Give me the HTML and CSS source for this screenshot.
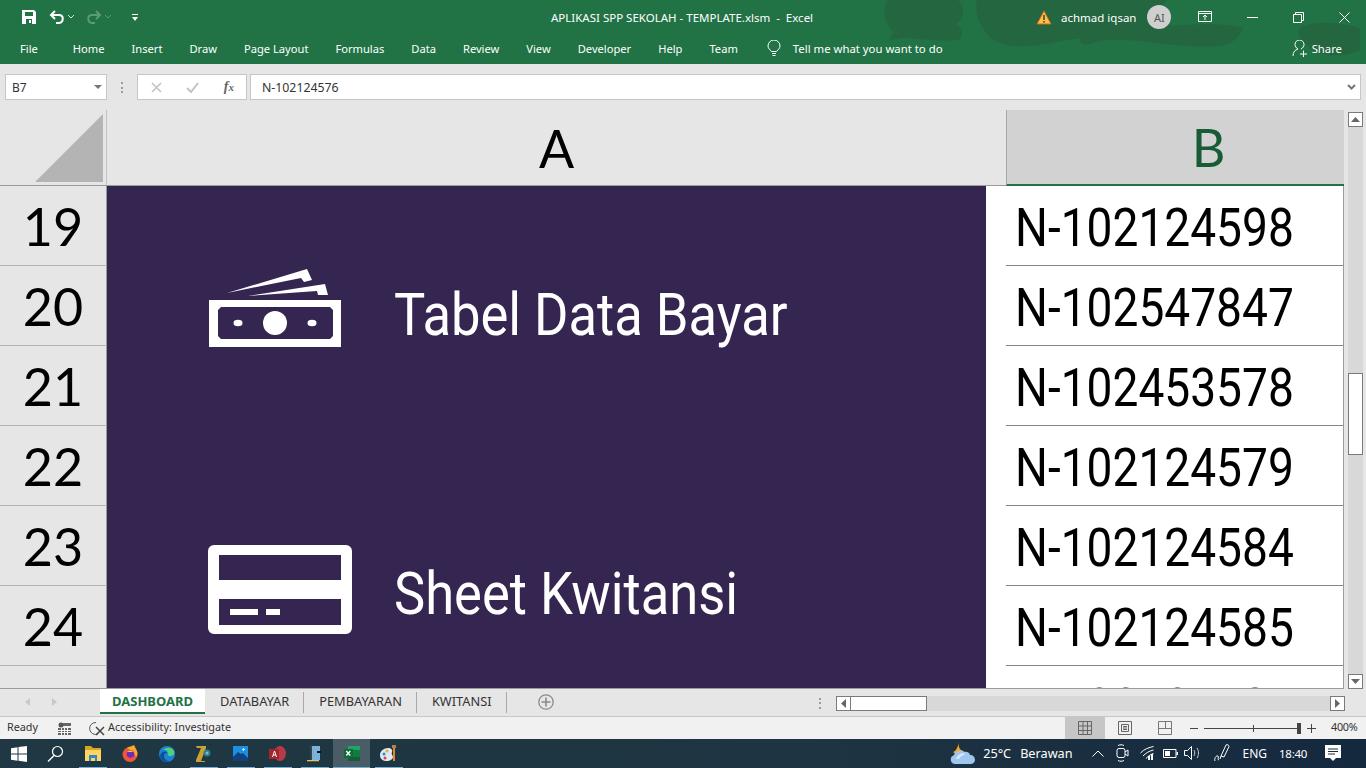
FILE: index.html
```html
<!DOCTYPE html>
<html lang="en">

<head>
    <meta charset="UTF-8" />
    <title>APLIKASI SPP SEKOLAH - TEMPLATE.xlsm - Excel</title>
    <link rel="stylesheet" href="styles.css">
</head>

<body>
    <div class="app">

        <header class="ribbon">
            <svg class="ribbonArt" width="1366" height="64" viewBox="0 0 1366 64">
                <path d="M888 0h70c8 8 6 18-2 24 10 6 6 14 2 16-20 2-40-2-56-2l-13 2 5-8c-10-8-12-22-6-32z" />
                <path d="M977 0h190c-12 12-8 22 6 26 24-2 46-4 70 2-4 10-10 16-24 18-50 4-96-14-130-2-12 2-8-6-8-6-30 4-60 14-84 4-14-8-24-28-20-42z" />
                <path d="M1300 28c14-8 40-6 60 0v22c-16 8-40 8-52-4-8-6-12-12-8-18z" />
            </svg>

            <div class="titleRow">
                <div class="qat">
                    <svg class="qatSave" width="16" height="16" viewBox="0 0 16 16"><path fill="#fff" d="M1 1h12l2 2v12H1z" /><path fill="#217346" d="M4 3h8v4H4zM5 10h6v5H5z" /><path fill="#fff" d="M8 11h2v3H8z" /></svg>
                    <svg class="qatUndo" width="16" height="16" viewBox="0 0 16 16"><path fill="none" stroke="#fff" stroke-width="2" d="M6 2L2 6l4 4M2 6h8c5 0 5 7 0 8H7" /></svg>
                    <svg class="qatDrop" width="6" height="4" viewBox="0 0 6 4"><path fill="none" stroke="#d5e5dc" d="M0 0l3 3 3-3" /></svg>
                    <svg class="qatRedo" width="16" height="16" viewBox="0 0 16 16"><path fill="none" stroke="#5c9a7a" stroke-width="2" d="M10 2l4 4-4 4M14 6H6c-5 0-5 7 0 8h3" /></svg>
                    <svg class="qatDrop" width="6" height="4" viewBox="0 0 6 4"><path fill="none" stroke="#5c9a7a" d="M0 0l3 3 3-3" /></svg>
                    <svg class="qatMore" width="6" height="7" viewBox="0 0 6 7"><path fill="#fff" d="M0 0h6v1H0zM0 3h6L3 7z" /></svg>
                </div>
                <div class="docTitle">APLIKASI SPP SEKOLAH - TEMPLATE.xlsm&nbsp; - &nbsp;Excel</div>
                <div class="account">
                    <svg width="16" height="15" viewBox="0 0 16 15"><path fill="#f6c344" stroke="#d9641e" d="M8 1l7 13H1z" /><path fill="#333" d="M7.3 5h1.4v5H7.3zM7.3 11h1.4v1.5H7.3z" /></svg>
                    <span class="userName">achmad iqsan</span>
                    <span class="avatar">AI</span>
                </div>
                <div class="winBtns">
                    <svg width="14" height="12" viewBox="0 0 14 12"><path fill="none" stroke="#fff" d="M.5.5h13v10H.5zM.5 2.5h13M7 9V4.5M5 6l2-2 2 2" /></svg>
                    <svg width="11" height="11" viewBox="0 0 11 11"><path stroke="#fff" d="M0 5.5h11" /></svg>
                    <svg width="11" height="11" viewBox="0 0 11 11"><path fill="none" stroke="#fff" d="M.5 2.5h8v8h-8zM2.5 2.5v-2h8v8h-2" /></svg>
                    <svg width="11" height="11" viewBox="0 0 11 11"><path stroke="#fff" d="M.5.5l10 10M10.5.5l-10 10" /></svg>
                </div>
            </div>

            <nav class="tabRow">
                <span class="tab tabFile">File</span>
                <span class="tab">Home</span>
                <span class="tab">Insert</span>
                <span class="tab">Draw</span>
                <span class="tab">Page Layout</span>
                <span class="tab">Formulas</span>
                <span class="tab">Data</span>
                <span class="tab">Review</span>
                <span class="tab">View</span>
                <span class="tab">Developer</span>
                <span class="tab">Help</span>
                <span class="tab">Team</span>
                <span class="tell">
                    <svg width="14" height="17" viewBox="0 0 14 17"><path fill="none" stroke="#fff" d="M4.5 11.5C3 9.5 1 8.500 1 6a6 6 0 0 1 12 0c0 2.500-2 3.500-3.500 5.500zM5 13.500h4M5.500 15.500h3" /></svg>
                    Tell me what you want to do
                </span>
                <span class="share">
                    <svg width="17" height="17" viewBox="0 0 17 17"><path fill="none" stroke="#fff" d="M1 16c0-4 2-6 5-7-2-1-3-3-3-4.500a4.500 4.500 0 0 1 9 0C12 6 11 8 9 9M8 14h7M11.500 10.500v7" /></svg>
                    Share
                </span>
            </nav>
        </header>

        <div class="formulaBar">
            <div class="nameBox">B7
                <svg width="8" height="4" viewBox="0 0 8 4"><path fill="#777" d="M0 0h8L4 4z" /></svg>
            </div>
            <span class="vdots"></span>
            <div class="fxBox">
                <svg width="11" height="11" viewBox="0 0 11 11"><path stroke="#c4c4c4" stroke-width="1.600" d="M1 1l9 9M10 1l-9 9" /></svg>
                <svg width="13" height="11" viewBox="0 0 13 11"><path fill="none" stroke="#c4c4c4" stroke-width="2" d="M1 6l4 4 7-9" /></svg>
                <i class="fx">f<small>x</small></i>
            </div>
            <div class="formulaInput">N-102124576
                <svg width="9" height="6" viewBox="0 0 9 6"><path fill="none" stroke="#777" stroke-width="2" d="M1 1l3.500 3.500L8 1" /></svg>
            </div>
        </div>

        <main class="sheet">
            <div class="colHeads">
                <div class="corner">
                    <svg width="68" height="68" viewBox="0 0 68 68"><path fill="#b4b4b4" d="M0 68L68 0v68z" /></svg>
                </div>
                <div class="colHead">A</div>
                <div class="colHead colHeadOn">B</div>
            </div>

            <div class="gridBody">
                <div class="rowHeads">
                    <div class="rowHead">19</div>
                    <div class="rowHead">20</div>
                    <div class="rowHead">21</div>
                    <div class="rowHead">22</div>
                    <div class="rowHead">23</div>
                    <div class="rowHead">24</div>
                </div>

                <div class="colA">
                    <div class="menuPanel">
                        <div class="menuItem">
                            <svg class="iconMoney" width="133" height="78" viewBox="19 19 133 78">
                                <path fill="#fff" fill-rule="evenodd" d="M19 50h132v47H19zM31 57l-3 3v26l3 3h109l3-3V60l-3-3z" />
                                <circle cx="85" cy="73" r="12" fill="#fff" />
                                <ellipse cx="48" cy="73" rx="4.500" ry="3.200" fill="#fff" />
                                <ellipse cx="122" cy="73" rx="4.500" ry="3.200" fill="#fff" />
                                <path fill="#fff" d="M37 43l80-24 5 11-8 2-3-4zM58 46l77-12 3 11h-10l-1-4z" />
                            </svg>
                            <span class="menuLabel">Tabel Data Bayar</span>
                        </div>
                        <div class="menuItem">
                            <svg class="iconCard" width="144" height="90" viewBox="18 15 144 90">
                                <path fill="#fff" fill-rule="evenodd" d="M24 15h132a6 6 0 0 1 6 6v77a6 6 0 0 1-6 6H24a6 6 0 0 1-6-6V21a6 6 0 0 1 6-6zM29 25v25h122V25zM29 69v26h122V69z" />
                                <path fill="#fff" d="M40 79h28v6H40zM76 79h14v6H76z" />
                            </svg>
                            <span class="menuLabel">Sheet Kwitansi</span>
                        </div>
                    </div>
                </div>

                <div class="colB">
                    <div class="cell"><span>N-102124598</span></div>
                    <div class="cell"><span>N-102547847</span></div>
                    <div class="cell"><span>N-102453578</span></div>
                    <div class="cell"><span>N-102124579</span></div>
                    <div class="cell"><span>N-102124584</span></div>
                    <div class="cell"><span>N-102124585</span></div>
                    <div class="cell"><span>N-102124586</span></div>
                </div>
            </div>

            <div class="vScroll">
                <span class="scrollBtn"><svg width="9" height="5" viewBox="0 0 9 5"><path fill="#666" d="M0 5l4.500-5L9 5z" /></svg></span>
                <div class="vTrack"><span class="vThumb"></span></div>
                <span class="scrollBtn"><svg width="9" height="5" viewBox="0 0 9 5"><path fill="#666" d="M0 0l4.500 5L9 0z" /></svg></span>
            </div>
        </main>

        <div class="sheetTabs">
            <div class="tabNav">
                <svg width="5" height="8" viewBox="0 0 5 8"><path fill="#c8c8c8" d="M5 0L0 4l5 4z" /></svg>
                <svg width="5" height="8" viewBox="0 0 5 8"><path fill="#c8c8c8" d="M0 0l5 4-5 4z" /></svg>
            </div>
            <span class="sheetTab sheetTabOn">DASHBOARD</span>
            <span class="sheetTab">DATABAYAR</span>
            <span class="sheetTab">PEMBAYARAN</span>
            <span class="sheetTab">KWITANSI</span>
            <svg class="addSheet" width="16" height="16" viewBox="0 0 16 16"><circle cx="8" cy="8" r="7.200" fill="none" stroke="#8a8a8a" stroke-width="1.300" /><path stroke="#8a8a8a" stroke-width="1.600" d="M8 3.500v9M3.500 8h9" /></svg>
            <span class="vdots vdotsTab"></span>
            <div class="hScroll">
                <span class="hBtn"><svg width="5" height="9" viewBox="0 0 5 9"><path fill="#666" d="M5 0L0 4.500 5 9z" /></svg></span>
                <span class="hThumb"></span>
                <span class="hTrack"></span>
                <span class="hBtn"><svg width="5" height="9" viewBox="0 0 5 9"><path fill="#666" d="M0 0l5 4.500L0 9z" /></svg></span>
            </div>
        </div>

        <div class="statusBar">
            <span class="ready">Ready</span>
            <svg class="macroIcon" width="13" height="13" viewBox="0 0 13 13"><circle cx="3" cy="3" r="2.500" fill="#555" /><path fill="#666" d="M5 1h8v3H5zM0 6h13v7H0z" /><path stroke="#f1f1f1" d="M0 8.500h13M0 10.500h13M3.500 6v7M6.500 6v7M9.500 6v7" /></svg>
            <svg class="a11yIcon" width="16" height="15" viewBox="0 0 16 15"><path fill="none" stroke="#555" d="M7 1.500A6 6 0 1 0 9 13" /><path stroke="#444" stroke-width="1.500" d="M7 6l8 8M15 6l-8 8" /></svg>
            <span>Accessibility: Investigate</span>
            <div class="viewBtns">
                <span class="viewBtn viewBtnOn"><svg width="14" height="14" viewBox="0 0 14 14"><path fill="none" stroke="#666" d="M.5.5h13v13H.5zM5 .5v13M9.500.5v13M.5 5h13M.5 9.500h13" /></svg></span>
                <span class="viewBtn"><svg width="14" height="14" viewBox="0 0 14 14"><path fill="none" stroke="#666" d="M.5.5h13v13H.5zM3.500 3.500h7v7h-7zM5 5.500h4M5 7h4M5 8.500h4" /></svg></span>
                <span class="viewBtn"><svg width="14" height="14" viewBox="0 0 14 14"><path fill="none" stroke="#777" d="M.5.5h13v13H.5zM7.500.5v7h-7M7.500 7.500h6" /></svg></span>
            </div>
            <div class="zoomCtl">
                <svg width="8" height="9" viewBox="0 0 8 9"><path stroke="#444" d="M0 4.500h8" /></svg>
                <span class="zoomSlider"><i class="zoomTick"></i><i class="zoomThumb"></i></span>
                <svg width="9" height="9" viewBox="0 0 9 9"><path stroke="#444" d="M0 4.500h9M4.500 0v9" /></svg>
            </div>
            <span class="zoomPct">400%</span>
        </div>

        <footer class="taskbar">
            <div class="taskIcons">
                <span class="taskIcon"><svg width="16" height="16" viewBox="0 0 16 16"><path fill="#fff" d="M0 2.300l6.500-1v6.300H0zM7.500 1.100L16 0v7.600H7.500zM0 8.500h6.500v6.300L0 13.800zM7.500 8.500H16V16l-8.500-1.200z" /></svg></span>
                <span class="taskIcon"><svg width="17" height="17" viewBox="0 0 17 17"><circle cx="10.500" cy="6.500" r="5" fill="none" stroke="#fff" stroke-width="1.200" /><path stroke="#fff" stroke-width="1.400" d="M7 10.500L1 16.500" /></svg></span>
                <span class="taskIcon taskOpen"><svg width="16" height="15" viewBox="0 0 16 15"><path fill="#d9a323" d="M0 0h6l2 2h8v3H0z" /><path fill="#ffd560" d="M0 4h16v11H0z" /><path fill="#2f86c8" d="M4 9h8v6h-2v-3H6v3H4z" /></svg></span>
                <span class="taskIcon"><svg width="16" height="17" viewBox="0 0 16 17"><circle cx="8" cy="9.500" r="7.500" fill="#f0553a" /><path fill="#ffa42e" d="M5 3c3-2 6-2 7-3 1 2 2 4 3 6 1 3 0 5-1 6-1-3-3-6-9-9z" /><circle cx="8.500" cy="9" r="3.800" fill="#6b2fb5" /><path fill="#ffbe33" d="M5 7c2-2 5-2 6 0-2 0-4 0-6 0z" /></svg></span>
                <span class="taskIcon"><svg width="16" height="16" viewBox="0 0 16 16"><circle cx="8" cy="8" r="8" fill="#1b83d4" /><path fill="#4fd07c" d="M4 4c3-3 9-3 11 1 1 3-1 5-4 5-1 0-3-1-2-2 1-2-3-5-5-4z" /><path fill="#0d4f95" d="M1 10c1-4 5-6 7-3-3 0-4 3-2 6 1 1 3 2 5 2-5 2-9-1-10-5z" /></svg></span>
                <span class="taskIcon taskOpen"><svg width="17" height="18" viewBox="0 0 17 18"><path fill="#c9a233" d="M1 1h10v2L6 16h4v1H1v-2L6 3H2z" /><circle cx="12" cy="8" r="3.500" fill="#2a7f80" /><circle cx="12" cy="8" r="1.500" fill="#7fb6dc" /></svg></span>
                <span class="taskIcon taskOpen"><svg width="15" height="15" viewBox="0 0 15 15"><path fill="#1f8de0" d="M0 0h15v15H0z" /><path fill="#10427f" d="M0 15v-4l5-5 3 2 2-1 5 5v3z" /><path fill="#bfe3fa" d="M9 3h1V2h1v1h1v1h-1v1h-1V4H9z" /></svg></span>
                <span class="taskIcon taskOpen"><svg width="17" height="15" viewBox="0 0 17 15"><ellipse cx="11" cy="7.500" rx="6" ry="7.500" fill="#b83a48" /><path fill="#a4262c" d="M0 3h10v10H0z" /><path fill="#fff" d="M3 11l2-6h1l2 6H7l-.4-1.400H4.400L4 11zM4.700 8.600h1.600L5.500 6z" /></svg></span>
                <span class="taskIcon taskOpen"><svg width="16" height="17" viewBox="0 0 16 17"><path fill="#3a3f45" d="M3 0h2v15H3z" /><path fill="#7ab2dc" d="M5 1h8v14H5z" /><path fill="#111" d="M10 6h4v2h-4z" /><path fill="#e6c35c" d="M0 15h12v1.300H0z" /></svg></span>
                <span class="taskIcon taskActive"><svg width="16" height="15" viewBox="0 0 16 15"><path fill="#21a366" d="M4 0h12v4H4z" /><path fill="#107c41" d="M4 4h12v7H4z" /><path fill="#185c37" d="M4 11h12v4H4z" /><path fill="#0e6b3a" d="M0 3h9v9H0z" /><path stroke="#fff" stroke-width="1.300" d="M2.300 5l4 4.500M6.300 5l-4 4.500" /></svg></span>
                <span class="taskIcon taskOpen"><svg width="18" height="17" viewBox="0 0 18 17"><path fill="#dfe9f2" d="M0 10c0-4 4-7 8-7 3 0 5 2 4 4-1 3 1 3 1 5s-3 4-6 4c-4 0-7-2-7-6z" /><circle cx="4" cy="9" r="1.500" fill="#2f86c8" /><circle cx="7" cy="6" r="1.500" fill="#e9b02c" /><circle cx="5" cy="13" r="1.500" fill="#d9483b" /><path fill="#e9852c" d="M13 3h2v13h-2z" /><path fill="#b9814a" d="M12 0h4v3h-4z" /></svg></span>
            </div>
            <div class="tray">
                <svg class="trayWeather" width="25" height="23" viewBox="0 0 25 23"><path fill="#f5a623" d="M9 0c-1 5 1 9 5 9-2 4-8 4-11 1C6 9 8 5 9 0z" /><path fill="#9fc6ee" d="M5 22a4.500 4.500 0 0 1-1-8.800C5 9 11 7 14 10c3-1 6 1 6 3 3 0 5 2 5 5 0 2-2 4-4 4z" /><path fill="#d7e8f9" d="M6 17c1-4 6-7 10-5-4 1-6 3-7 5z" /></svg>
                <span class="trayTemp">25°C</span>
                <span class="trayWord">Berawan</span>
                <svg class="trayChevron" width="12" height="7" viewBox="0 0 12 7"><path fill="none" stroke="#fff" d="M.5 6.500L6 1l5.500 5.500" /></svg>
                <svg class="trayMeet" width="14" height="18" viewBox="0 0 14 18"><rect x="2" y="4.500" width="8" height="9" rx="2" fill="none" stroke="#fff" /><path fill="none" stroke="#fff" d="M10 8l3-2v6l-3-2M3 1.500c2-1 4-1 6 0M3 16.500c2 1 4 1 6 0" /></svg>
                <svg class="trayWifi" width="14" height="14" viewBox="0 0 14 14"><path fill="none" stroke="#fff" d="M.5 7C4 3 9 1.500 13.500.5M3 10c3-3 6-5 10.500-6M6 12.500c2-2 4-4 7.500-5" /><path fill="#fff" d="M8 10h2v4H8zM11 8h2v6h-2z" /></svg>
                <svg class="trayBatt" width="15" height="9" viewBox="0 0 15 9"><path fill="none" stroke="#fff" d="M.5.500h12.500v8H.5z" /><path fill="#fff" d="M2 2h5v5H2zM13.500 3h1.500v3h-1.500z" /></svg>
                <svg class="trayVol" width="16" height="14" viewBox="0 0 16 14"><path fill="none" stroke="#fff" d="M.5 4.500h3l4-4v13l-4-4h-3z" /><path fill="none" stroke="#c8cfd6" d="M10 4c1 2 1 4 0 6M13 2c2 3 2 7 0 10" /></svg>
                <svg class="trayPen" width="16" height="18" viewBox="0 0 16 18"><path fill="none" stroke="#fff" d="M7 12L12 1c1-1 3 0 3 1.500L10 13zM7 12l-1 3M1 17c-1-2 1-6 3-5 1 1-1 4 1 4" /></svg>
                <span class="trayLang">ENG</span>
                <span class="trayClock">18:40</span>
                <svg class="trayNote" width="16" height="16" viewBox="0 0 16 16"><path fill="#fff" d="M0 0h16v13h-5l-3 3-3-3H0z" /><path stroke="#1a2e3e" d="M3 4h10M3 6.500h10M3 9h7" /></svg>
            </div>
        </footer>
    </div>
</body>

</html>
```

FILE: styles.css
```css
* {
    box-sizing: border-box;
}

html,
body {
    margin: 0;
    height: 100%;
    overflow: hidden;
}

body {
    font-family: "Noto Sans", "Open Sans", sans-serif;
    font-size: 12px;
    color: #333;
}

svg {
    display: block;
    flex: none;
}

.app {
    display: flex;
    flex-direction: column;
    width: 1366px;
    height: 768px;
}

/* Title bar and ribbon tabs */
.ribbon {
    position: relative;
    flex: none;
    height: 64px;
    background: #217346;
    color: #fff;
}

.ribbonArt {
    position: absolute;
    top: 0;
    left: 0;
    fill: #23663f;
}

.titleRow,
.tabRow {
    position: relative;
    display: flex;
    align-items: center;
}

.titleRow {
    height: 34px;
}

.qat {
    display: flex;
    flex: none;
    align-items: center;
    width: 551px;
    padding-left: 21px;
}

.qatUndo {
    margin-left: 12px;
}

.qat .qatDrop {
    margin-left: 3px;
}

.qatRedo {
    margin-left: 12px;
}

.qatMore {
    margin-left: 21px;
}

.docTitle {
    flex: none;
    width: 485px;
    font-size: 11.5px;
    white-space: nowrap;
}

.account {
    display: flex;
    flex: none;
    align-items: center;
}

.userName {
    margin-left: 9px;
    font-size: 11.5px;
    white-space: nowrap;
}

.avatar {
    display: flex;
    align-items: center;
    justify-content: center;
    width: 24px;
    height: 24px;
    margin-left: 11px;
    border-radius: 50%;
    background: #cfcfcf;
    color: #555;
    font-size: 11px;
}

.winBtns {
    display: flex;
    flex: none;
    align-items: center;
    gap: 35px;
    margin-left: 27px;
}

.tabRow {
    height: 28px;
    gap: 27px;
    padding: 0 24px 0 20px;
    font-size: 11.15px;
}

.tabFile {
    margin-right: 8px;
}

.tell {
    display: flex;
    align-items: center;
    gap: 12px;
    margin-left: 2px;
    font-size: 11.35px;
}

.share {
    display: flex;
    align-items: center;
    gap: 3px;
    margin-left: auto;
    font-size: 11.3px;
}

/* Formula bar */
.formulaBar {
    display: flex;
    flex: none;
    align-items: center;
    height: 46px;
    padding: 0 5px;
    background: #e6e6e6;
}

.nameBox,
.fxBox,
.formulaInput {
    display: flex;
    align-items: center;
    height: 26px;
    background: #fff;
    border: 1px solid #c6c6c6;
}

.nameBox {
    justify-content: space-between;
    width: 102px;
    padding: 0 4px 0 6px;
}

.vdots {
    width: 2px;
    height: 11px;
    margin: 0 14px;
    background: repeating-linear-gradient(#9c9c9c 0 2px, transparent 2px 4.500px);
}

.fxBox {
    justify-content: space-between;
    width: 110px;
    padding: 0 12px 0 13px;
}

.fx {
    font-family: "Liberation Serif", serif;
    font-size: 14px;
    font-weight: 700;
    color: #666;
}

.fx small {
    font-size: 11px;
}

.formulaInput {
    flex: 1;
    justify-content: space-between;
    margin-left: 3px;
    padding: 0 4px 0 11px;
    font-size: 12.3px;
}

/* Sheet grid */
.sheet {
    display: grid;
    flex: none;
    grid-template-columns: 1344px 22px;
    grid-template-rows: 76px 503px;
    height: 579px;
    background: #e6e6e6;
}

.colHeads {
    display: flex;
    border-bottom: 1px solid #9b9b9b;
}

.corner {
    display: flex;
    align-items: flex-end;
    justify-content: flex-end;
    width: 107px;
    padding: 0 3px 3px 0;
    border-right: 1px solid #c2c2c2;
}

.colHead {
    display: flex;
    align-items: center;
    justify-content: center;
    width: 899px;
    font-family: Lato, "Open Sans", sans-serif;
    font-size: 52px;
    color: #000;
}

.colHeadOn {
    width: 338px;
    margin-bottom: -1px;
    padding-left: 66px;
    background: #d2d2d2;
    border-left: 1px solid #a8a8a8;
    border-bottom: 2px solid #217346;
    color: #185c37;
}

.gridBody {
    display: grid;
    grid-template-columns: 107px 899px 338px;
    grid-column: 1;
    overflow: hidden;
    border-bottom: 1px solid #9b9b9b;
}

.rowHeads {
    border-right: 1px solid #9b9b9b;
}

.rowHead {
    display: flex;
    align-items: center;
    justify-content: center;
    height: 80px;
    border-bottom: 1px solid #b4b4b4;
    font-family: Lato, "Open Sans", sans-serif;
    font-size: 52px;
    color: #000;
}

.colA {
    padding-right: 20px;
    background: #fff;
}

.menuPanel {
    display: flex;
    flex-direction: column;
    gap: 179px;
    height: 100%;
    padding: 78px 0 0 102px;
    background: #352551;
}

.menuItem {
    display: flex;
    align-items: center;
    height: 100px;
}

.iconMoney {
    margin: 0 53px 12px 0;
}

.iconCard {
    margin: 0 43px 6px -1px;
}

.menuLabel {
    display: inline-block;
    margin-left: -1px;
    font-family: Roboto, sans-serif;
    font-size: 60px;
    color: #fff;
    white-space: nowrap;
    transform: scaleX(.875);
    transform-origin: left center;
}

.colB {
    background: #fff;
    border-right: 1px solid #9b9b9b;
}

.cell {
    display: flex;
    align-items: center;
    height: 80px;
    padding: 5px 0 0 9px;
    border-bottom: 1px solid #858585;
    font-family: Roboto, sans-serif;
    font-size: 53px;
    color: #000;
}

.cell span {
    transform: scaleX(.87);
    transform-origin: left center;
}

/* Scrollbars */
.vScroll {
    display: flex;
    flex-direction: column;
    grid-column: 2;
    grid-row: 1 / span 2;
    align-items: flex-start;
    padding: 2px 0 0 4px;
}

.scrollBtn {
    display: flex;
    flex: none;
    align-items: center;
    justify-content: center;
    width: 15px;
    height: 15px;
    background: #fff;
    border: 1px solid #7a7a7a;
}

.vTrack {
    flex: 1;
    width: 15px;
    padding-top: 246px;
    background: #d8d8d8;
}

.vThumb {
    display: block;
    height: 82px;
    background: #fff;
    border: 1px solid #7a7a7a;
}

.sheetTabs {
    display: flex;
    flex: none;
    align-items: flex-start;
    height: 28px;
    background: #e6e6e6;
    border-bottom: 1px solid #c8c8c8;
    font-size: 12.8px;
}

.tabNav {
    display: flex;
    gap: 22px;
    align-items: center;
    width: 100px;
    height: 26px;
    padding-left: 25px;
}

.sheetTab {
    display: flex;
    align-items: center;
    height: 21px;
    margin-top: 3px;
    padding: 0 14px 3px 15px;
    border-right: 1px solid #a8a8a8;
}

.sheetTabOn {
    height: 25px;
    margin-top: 0;
    padding: 0 12px;
    background: #fff;
    border-right: 0;
    border-bottom: 2px solid #217346;
    font-size: 13px;
    font-weight: 700;
    color: #217346;
}

.addSheet {
    margin: 5px 0 0 31px;
}

.vdotsTab {
    margin: 9px 15px 0 auto;
}

.hScroll {
    display: flex;
    flex: none;
    width: 509px;
    height: 15px;
    margin: 7px 21px 0 0;
}

.hBtn {
    display: flex;
    flex: none;
    align-items: center;
    justify-content: center;
    width: 15px;
    background: #fff;
    border: 1px solid #7a7a7a;
}

.hThumb {
    width: 76px;
    background: #fff;
    border: 1px solid #7a7a7a;
    border-left: 0;
}

.hTrack {
    flex: 1;
    background: #d8d8d8;
}

/* Status bar */
.statusBar {
    display: flex;
    flex: none;
    align-items: center;
    height: 22px;
    padding-left: 7px;
    background: #f1f1f1;
    font-size: 10.8px;
    line-height: 18px;
}

.statusBar > span {
    margin-bottom: 2px;
}

.macroIcon {
    margin-left: 20px;
}

.a11yIcon {
    margin: 0 3px 0 18px;
}

.viewBtns {
    display: flex;
    height: 100%;
    margin-left: auto;
}

.viewBtn {
    display: flex;
    align-items: center;
    justify-content: center;
    width: 40px;
}

.viewBtnOn {
    background: #c6c6c6;
}

.zoomCtl {
    display: flex;
    align-items: center;
    gap: 6px;
    margin-left: 5px;
}

.zoomSlider {
    position: relative;
    width: 97px;
    height: 1px;
    background: #444;
}

.zoomTick {
    position: absolute;
    top: -3px;
    left: 49px;
    width: 1px;
    height: 7px;
    background: #444;
}

.zoomThumb {
    position: absolute;
    top: -5px;
    right: 0;
    width: 4px;
    height: 11px;
    background: #444;
}

.zoomPct {
    width: 35px;
    margin-left: 15px;
    letter-spacing: -.3px;
}

/* Windows taskbar */
.taskbar {
    display: flex;
    flex: none;
    justify-content: space-between;
    height: 30px;
    background: linear-gradient(90deg, #1f3843, #1e3442 60%, #14293e);
    color: #fff;
}

.taskIcons {
    display: flex;
}

.taskIcon {
    display: flex;
    align-items: center;
    justify-content: center;
    width: 37px;
    padding-bottom: 1px;
}

.taskOpen {
    background: linear-gradient(#75b0dc, #75b0dc) 50% 100% / 28px 2px no-repeat;
}

.taskActive {
    background: #4a5c66;
    box-shadow: inset 0 -2px #75b0dc;
}

.tray {
    display: flex;
    align-items: center;
    padding: 0 25px 2px 0;
    font-size: 12.7px;
}

.trayTemp {
    margin-left: 8px;
}

.trayWord {
    margin-left: 9px;
}

.trayChevron {
    margin-left: 19px;
}

.trayMeet {
    margin-left: 11px;
}

.trayWifi {
    margin-left: 11px;
}

.trayBatt {
    margin-left: 9px;
}

.trayVol {
    margin-left: 6px;
}

.trayPen {
    margin-left: 14px;
}

.trayLang {
    margin-left: 13px;
    font-size: 12px;
}

.trayClock {
    margin-left: 12px;
    font-size: 11.5px;
    letter-spacing: -.3px;
}

.trayNote {
    margin-left: 18px;
}
```
